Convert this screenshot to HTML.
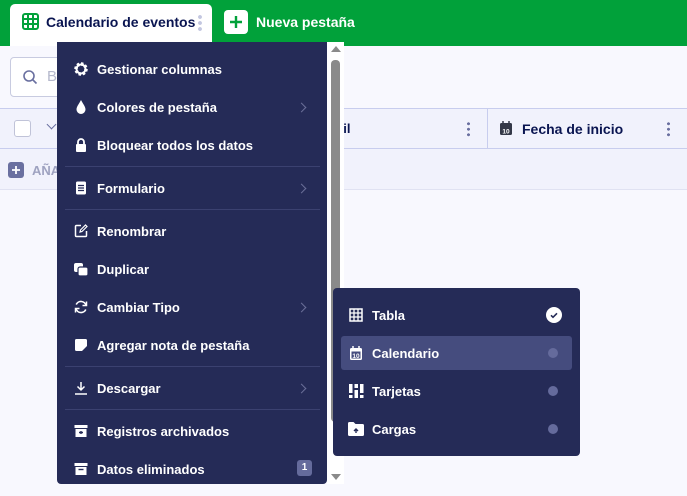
<!DOCTYPE html>
<html><head><meta charset="utf-8"><style>
*{box-sizing:border-box;margin:0;padding:0}
body{width:687px;height:496px;overflow:hidden;background:#f8f8fe;font-family:"Liberation Sans",sans-serif;position:relative;font-weight:bold;font-size:13px}
.hdr{position:absolute;left:0;top:0;width:687px;height:46px;background:#01a13a}
.tab{position:absolute;left:10px;top:4px;width:202px;height:42px;background:#fff;border-radius:5px 5px 0 0}
.abs{position:absolute}
.menu{position:absolute;left:57px;top:42px;width:270px;height:442px;background:#252b57;border-radius:0 0 4px 4px;color:#fff}
.it{position:absolute;left:0;width:270px;height:38px;display:flex;align-items:center;padding-left:40px;font-size:13px}
.ic{position:absolute;left:16px;top:11px;width:16px;height:16px}
.chev{position:absolute;right:22px;top:16px;width:7px;height:7px;border-right:1.5px solid #6a6f98;border-top:1.5px solid #6a6f98;transform:rotate(45deg)}
.div{position:absolute;left:8px;width:255px;height:1px;background:#3b4170}
.sub{position:absolute;left:333px;top:288px;width:247px;height:168px;background:#252b57;border-radius:4px;color:#fff}
.sit{position:absolute;left:8px;width:231px;height:34px;display:flex;align-items:center;padding-left:31px;border-radius:3px}
.dot{position:absolute;right:14px;top:12px;width:10px;height:10px;border-radius:50%;background:#656b9c}
</style></head><body>
<div class="hdr"></div>
<div class="tab"></div>
<svg class="abs" style="left:22px;top:13px" width="17" height="17" viewBox="0 0 17 17"><rect x="1" y="1" width="15" height="15" rx="2" fill="none" stroke="#01a13a" stroke-width="2"/><path d="M6 1v15M11 1v15M1 6h15M1 11h15" stroke="#01a13a" stroke-width="2"/></svg>
<div class="abs" style="left:46px;top:14px;color:#0a1551;font-size:14px">Calendario de eventos</div>
<div class="abs" style="left:198px;top:14px;width:4px;height:18px;background:radial-gradient(circle,#c3c7e0 1.8px,transparent 2px) 0 0/4px 6px"></div>
<div class="abs" style="left:224px;top:10px;width:24px;height:24px;background:#fff;border-radius:4px"></div>
<svg class="abs" style="left:228px;top:14px" width="16" height="16"><path d="M8 2v12M2 8h12" stroke="#01a13a" stroke-width="2.4"/></svg>
<div class="abs" style="left:256px;top:14px;color:#fff;font-size:14px">Nueva pestaña</div>

<div class="abs" style="left:10px;top:57px;width:60px;height:40px;border:1px solid #c8cbe0;border-radius:4px;background:#fff"></div>
<svg class="abs" style="left:22px;top:69px" width="16" height="16"><circle cx="7" cy="7" r="5" fill="none" stroke="#6a70a0" stroke-width="1.6"/><path d="M11 11l3.5 3.5" stroke="#6a70a0" stroke-width="1.6"/></svg>
<div class="abs" style="left:47px;top:68px;color:#b5b8cc;font-weight:normal;font-size:15px">B</div>
<div class="abs" style="left:0;top:108px;width:687px;height:41px;background:#f1f2fc;border-top:1px solid #c8cdee;border-bottom:1px solid #c8cdee"></div>
<div class="abs" style="left:14px;top:120px;width:17px;height:17px;border:1.5px solid #c0c3d8;border-radius:3px;background:#fff"></div>
<div class="abs" style="left:48px;top:121px;width:7px;height:7px;border-right:1.5px solid #6a70a0;border-bottom:1.5px solid #6a70a0;transform:rotate(45deg)"></div>
<div class="abs" style="left:487px;top:109px;width:1px;height:39px;background:#c8cdee"></div>
<div class="abs" style="left:336px;top:121px;color:#0a1551">ail</div>
<div class="abs" style="left:467px;top:121px;width:3px;height:16px;background:radial-gradient(circle,#6a70a0 1.4px,transparent 1.6px) 0 0/3px 5.5px"></div>
<div class="abs" style="left:667px;top:121px;width:3px;height:16px;background:radial-gradient(circle,#6a70a0 1.4px,transparent 1.6px) 0 0/3px 5.5px"></div>
<svg class="abs" style="left:499px;top:120px" width="14" height="16"><rect x="1" y="3" width="12" height="12" rx="1.5" fill="#343848"/><path d="M4 1v3M10 1v3" stroke="#343848" stroke-width="1.5"/><text x="7" y="13.5" font-size="6.5" fill="#fff" text-anchor="middle" font-family="Liberation Sans">10</text></svg>
<div class="abs" style="left:522px;top:121px;color:#0a1551;font-size:14px">Fecha de inicio</div>
<div class="abs" style="left:0;top:149px;width:687px;height:41px;background:#f1f2fc;border-bottom:1px solid #e0e2f2"></div>
<div class="abs" style="left:8px;top:162px;width:16px;height:16px;background:#6a70a0;border-radius:3px"></div>
<svg class="abs" style="left:8px;top:162px" width="16" height="16"><path d="M8 4v8M4 8h8" stroke="#fff" stroke-width="1.8"/></svg>
<div class="abs" style="left:32px;top:163px;color:#9ea2c0;font-size:13px">AÑA</div>

<div class="abs" style="left:327px;top:42px;width:17px;height:442px;background:#fff"></div>
<div class="abs" style="left:331px;top:60px;width:9px;height:362px;background:#8a8a8a;border-radius:4px"></div>
<div class="abs" style="left:331px;top:46px;border-left:5px solid transparent;border-right:5px solid transparent;border-bottom:6px solid #8a8a8a"></div>
<div class="abs" style="left:331px;top:474px;border-left:5px solid transparent;border-right:5px solid transparent;border-top:6px solid #8a8a8a"></div>

<div class="menu">
<div class="it" style="top:8px"><svg class="ic" viewBox="0 0 16 16"><circle cx="8" cy="8" r="5" fill="none" stroke="#fff" stroke-width="3.5" stroke-dasharray="2.2 1.7"/><circle cx="8" cy="8" r="4.5" fill="none" stroke="#fff" stroke-width="2"/></svg>Gestionar columnas</div>
<div class="it" style="top:46px"><svg class="ic" viewBox="0 0 16 16"><path d="M8 1C6 5 3.5 7.5 3.5 10.5a4.5 4.5 0 009 0C12.5 7.5 10 5 8 1z" fill="#fff"/></svg>Colores de pestaña<span class="chev"></span></div>
<div class="it" style="top:84px"><svg class="ic" viewBox="0 0 16 16"><rect x="3" y="7" width="10" height="8" rx="1" fill="#fff"/><path d="M5 7V5a3 3 0 016 0v2" fill="none" stroke="#fff" stroke-width="1.8"/></svg>Bloquear todos los datos</div>
<div class="div" style="top:124px"></div>
<div class="it" style="top:127px"><svg class="ic" viewBox="0 0 16 16"><rect x="3" y="1.5" width="10" height="13" rx="1.5" fill="#fff"/><path d="M5 5.5h6M5 8h6M5 10.5h6" stroke="#252b57" stroke-width="1.2"/></svg>Formulario<span class="chev"></span></div>
<div class="div" style="top:167px"></div>
<div class="it" style="top:170px"><svg class="ic" viewBox="0 0 16 16"><path d="M8 2.5H3.5a1 1 0 00-1 1v9a1 1 0 001 1h9a1 1 0 001-1V8" fill="none" stroke="#fff" stroke-width="1.5"/><path d="M7 9l.5-2 5-5 1.5 1.5-5 5z" fill="none" stroke="#fff" stroke-width="1.2"/></svg>Renombrar</div>
<div class="it" style="top:208px"><svg class="ic" viewBox="0 0 16 16"><rect x="1" y="2" width="9" height="9" rx="2" fill="#fff"/><rect x="5" y="6" width="10" height="9" rx="2" fill="#fff" stroke="#252b57" stroke-width="1.2"/></svg>Duplicar</div>
<div class="it" style="top:246px"><svg class="ic" viewBox="0 0 16 16"><path d="M13 6.5A5.2 5.2 0 003.2 5.5M3 9.5a5.2 5.2 0 009.8 1" fill="none" stroke="#fff" stroke-width="1.6"/><path d="M13.5 2.5v4h-4M2.5 13.5v-4h4" fill="none" stroke="#fff" stroke-width="1.5"/></svg>Cambiar Tipo<span class="chev"></span></div>
<div class="it" style="top:284px"><svg class="ic" viewBox="0 0 16 16"><path d="M2 3.5a1.5 1.5 0 011.5-1.5h9A1.5 1.5 0 0114 3.5V9l-5 5H3.5A1.5 1.5 0 012 12.5z" fill="#fff"/></svg>Agregar nota de pestaña</div>
<div class="div" style="top:324px"></div>
<div class="it" style="top:327px"><svg class="ic" viewBox="0 0 16 16"><path d="M8 2v8M4.5 6.5L8 10l3.5-3.5M2 14h12" fill="none" stroke="#fff" stroke-width="1.5"/></svg>Descargar<span class="chev"></span></div>
<div class="div" style="top:367px"></div>
<div class="it" style="top:370px"><svg class="ic" viewBox="0 0 16 16"><rect x="1.5" y="2" width="13" height="3" fill="#fff"/><rect x="2.5" y="6" width="11" height="8" fill="#fff"/><path d="M6 9.5h4M8 8v3" stroke="#252b57" stroke-width="1.4"/></svg>Registros archivados</div>
<div class="it" style="top:408px"><svg class="ic" viewBox="0 0 16 16"><rect x="1.5" y="2" width="13" height="3" fill="#fff"/><rect x="2.5" y="6" width="11" height="8" fill="#fff"/><path d="M5.5 8.5h5" stroke="#252b57" stroke-width="1.4"/></svg>Datos eliminados<span style="position:absolute;right:15px;top:10px;width:15px;height:16px;background:#656b9c;border-radius:3px;font-size:10px;text-align:center;line-height:16px">1</span></div>
</div>

<div class="sub">
<div class="sit" style="top:10px"><svg class="abs" style="left:8px;top:10px" width="14" height="14"><rect x="1" y="1" width="12" height="12" fill="none" stroke="#fff" stroke-width="1.5"/><path d="M5 1v12M9 1v12M1 5h12M1 9h12" stroke="#fff" stroke-width="1.3"/></svg>Tabla<span class="abs" style="right:10px;top:9px;width:16px;height:16px;border-radius:50%;background:#fff"></span><svg class="abs" style="right:10px;top:9px" width="16" height="16"><path d="M5 8.3l2 2 4-4" fill="none" stroke="#252b57" stroke-width="1.6"/></svg></div>
<div class="sit" style="top:48px;background:#454c7e"><svg class="abs" style="left:8px;top:9px" width="14" height="16"><rect x="1" y="3" width="12" height="12" rx="1.5" fill="#fff"/><path d="M4 1v3M10 1v3" stroke="#fff" stroke-width="1.5"/><rect x="2.5" y="6.5" width="9" height="7" fill="#454c7e"/><text x="7" y="13" font-size="6.5" fill="#fff" text-anchor="middle" font-family="Liberation Sans">10</text></svg>Calendario<span class="dot"></span></div>
<div class="sit" style="top:86px"><svg class="abs" style="left:8px;top:10px" width="15" height="14"><rect x="0" y="0" width="3.5" height="9" fill="#fff"/><rect x="0" y="11" width="3.5" height="3" fill="#fff"/><rect x="5.5" y="0" width="3.5" height="4" fill="#fff"/><rect x="5.5" y="6" width="3.5" height="8" fill="#fff"/><rect x="11" y="0" width="3.5" height="9" fill="#fff"/><rect x="11" y="11" width="3.5" height="3" fill="#fff"/></svg>Tarjetas<span class="dot"></span></div>
<div class="sit" style="top:124px"><svg class="abs" style="left:7px;top:10px" width="16" height="14"><path d="M0 1.5A1.5 1.5 0 011.5 0h4l2 2h7A1.5 1.5 0 0116 3.5v9A1.5 1.5 0 0114.5 14h-13A1.5 1.5 0 010 12.5z" fill="#fff"/><path d="M8 11V7M6 9l2-2 2 2" fill="none" stroke="#252b57" stroke-width="1.4"/></svg>Cargas<span class="dot"></span></div>
</div>
</body></html>
